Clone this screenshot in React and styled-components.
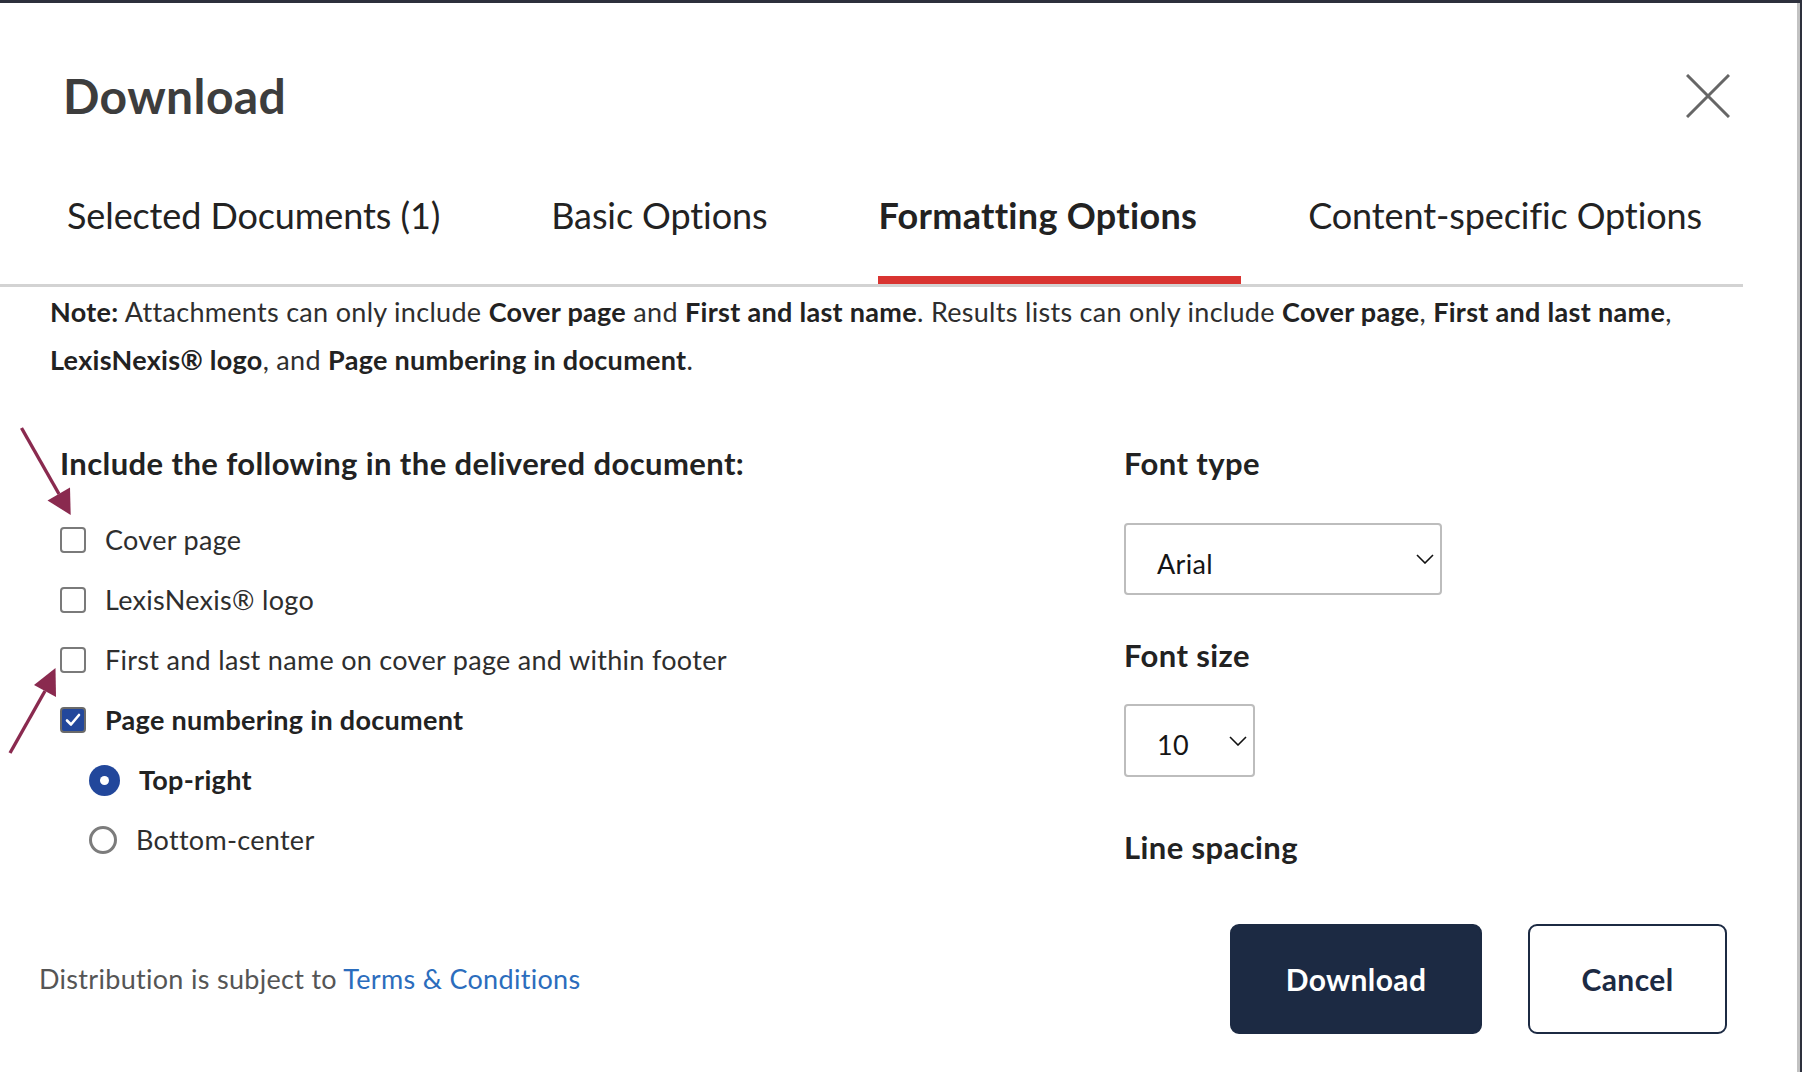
import styled, { createGlobalStyle } from 'styled-components';

const GlobalStyle = createGlobalStyle`
    html, body {
        margin: 0;
        padding: 0;
        background: #2d303c;
    }
    * {
        box-sizing: border-box;
    }
`;

const NAVY = '#1c2a43';
const BLUE = '#22479b';

const options = [
    { label: 'Cover page', checked: false },
    { label: 'LexisNexis® logo', checked: false },
    { label: 'First and last name on cover page and within footer', checked: false },
    { label: 'Page numbering in document', checked: true },
];

const positions = [
    { label: 'Top-right', checked: true },
    { label: 'Bottom-center', checked: false },
];

const tabs = ['Selected Documents (1)', 'Basic Options', 'Formatting Options', 'Content-specific Options'];

function Chevron() {
    return (
        <svg width="18" height="10" viewBox="0 0 18 10" fill="none">
            <path d="M1 1L9 9L17 1" stroke="#111" strokeWidth="1.6" />
        </svg>
    );
}

function Arrows() {
    return (
        <ArrowLayer width="120" height="780" viewBox="0 0 120 780">
            <line x1="21.5" y1="428" x2="59" y2="494" stroke="#8a2a4f" strokeWidth="3.4" />
            <polygon points="70.7,515 47.5,500.5 70,487.5" fill="#8a2a4f" />
            <line x1="10" y1="753" x2="45" y2="691" stroke="#8a2a4f" strokeWidth="3.4" />
            <polygon points="55.5,668 34,685 56,697" fill="#8a2a4f" />
        </ArrowLayer>
    );
}

function App() {
    return (
        <Page>
            <GlobalStyle />
            <Modal>
                <Header>
                    <Title>Download</Title>
                    <CloseButton aria-label="Close">
                        <svg width="44" height="44" viewBox="0 0 44 44" fill="none">
                            <path d="M1 1L43 43M43 1L1 43" stroke="#666" strokeWidth="3" />
                        </svg>
                    </CloseButton>
                </Header>

                <TabBar>
                    {tabs.map(tab => (
                        <Tab key={tab} active={tab === 'Formatting Options'}>{tab}</Tab>
                    ))}
                </TabBar>

                <Note>
                    <b>Note:</b> Attachments can only include <b>Cover page</b> and <b>First and last name</b>. Results lists can only include <b>Cover page</b>, <b>First and last name</b>, <b>LexisNexis® logo</b>, and <b>Page numbering in document</b>.
                </Note>

                <MainGrid>
                    <div>
                        <SectionHeading>Include the following in the delivered document:</SectionHeading>
                        <OptionList>
                            {options.map(opt => (
                                <OptionRow key={opt.label}>
                                    <CheckBox checked={opt.checked}>
                                        {opt.checked && (
                                            <svg width="16" height="14" viewBox="0 0 16 14" fill="none">
                                                <path d="M2 7.5L6 11.5L14 2" stroke="#fff" strokeWidth="2.6" strokeLinecap="round" strokeLinejoin="round" />
                                            </svg>
                                        )}
                                    </CheckBox>
                                    <OptionLabel bold={opt.checked}>{opt.label}</OptionLabel>
                                </OptionRow>
                            ))}
                            {positions.map(pos => (
                                <OptionRow key={pos.label} indent>
                                    <Radio checked={pos.checked} />
                                    <OptionLabel bold={pos.checked}>{pos.label}</OptionLabel>
                                </OptionRow>
                            ))}
                        </OptionList>
                    </div>

                    <div>
                        <SectionHeading>Font type</SectionHeading>
                        <SelectBox width={318} height={72} gap={42}>
                            <SelectValue>Arial</SelectValue>
                            <Chevron />
                        </SelectBox>
                        <SectionHeading gap={42}>Font size</SectionHeading>
                        <SelectBox width={131} height={73} gap={31}>
                            <SelectValue>10</SelectValue>
                            <Chevron />
                        </SelectBox>
                        <SectionHeading gap={52}>Line spacing</SectionHeading>
                    </div>
                </MainGrid>

                <Footer>
                    <FooterText>
                        Distribution is subject to <TermsLink href="#">Terms &amp; Conditions</TermsLink>
                    </FooterText>
                    <ButtonGroup>
                        <Button primary>Download</Button>
                        <Button>Cancel</Button>
                    </ButtonGroup>
                </Footer>
            </Modal>
            <Arrows />
        </Page>
    );
}

export default App;


const Page = styled.div`
    position: relative;
    width: 1802px;
    height: 1072px;
    padding-top: 3px;
    overflow: hidden;
    font-family: 'Lato', 'Liberation Sans', sans-serif;
    color: #2b2b2b;
`;

const Modal = styled.div`
    width: 1800px;
    height: 1069px;
    background: #fff;
    border-right: 3px solid #c2c2c2;
`;

const Header = styled.div`
    display: flex;
    align-items: center;
    justify-content: space-between;
    padding: 64px 67px 0 63px;
`;

const Title = styled.h2`
    margin: 0;
    font-size: 48px;
    line-height: 58px;
    font-weight: 700;
    letter-spacing: 0.4px;
    color: #3d3d3d;
`;

const CloseButton = styled.button`
    display: flex;
    padding: 0;
    border: none;
    background: none;
    cursor: pointer;
`;

const TabBar = styled.div`
    display: flex;
    gap: 67px;
    width: 1743px;
    margin-top: 68px;
    padding-left: 67px;
    border-bottom: 3px solid #d3d3d3;
`;

const Tab = styled.div`
    padding: 0 44px 39px 0;
    font-size: 36px;
    line-height: 44px;
    font-weight: ${props => props.active ? 700 : 400};
    letter-spacing: ${props => props.active ? '0.3px' : '-0.1px'};
    color: #222;
    border-bottom: 8px solid ${props => props.active ? '#d93431' : 'transparent'};
    white-space: nowrap;
    cursor: pointer;
`;

const Note = styled.p`
    margin: 0;
    width: 1720px;
    padding: 1px 0 0 50px;
    font-size: 27px;
    line-height: 48px;
    letter-spacing: 0.3px;
    color: #2e2e2e;

    b {
        font-weight: 700;
        color: #222;
    }
`;

const MainGrid = styled.div`
    display: grid;
    grid-template-columns: 1064px 1fr;
    margin-top: 61px;
    padding-left: 60px;
`;

const SectionHeading = styled.h3`
    margin: ${props => props.gap || 0}px 0 0;
    font-size: 31px;
    line-height: 36px;
    font-weight: 700;
    letter-spacing: 0.4px;
    color: #222;
`;

const OptionList = styled.div`
    margin-top: 29px;
`;

const OptionRow = styled.label`
    display: flex;
    align-items: center;
    gap: 19px;
    height: 60px;
    padding-left: ${props => props.indent ? '29px' : '0'};
    cursor: pointer;
`;

const CheckBox = styled.span`
    display: flex;
    align-items: center;
    justify-content: center;
    width: 26px;
    height: 26px;
    border: 2px solid ${props => props.checked ? '#6a6a6a' : '#7a7a7a'};
    border-radius: 4px;
    background: ${props => props.checked ? BLUE : '#fff'};
`;

const Radio = styled.span`
    display: flex;
    align-items: center;
    justify-content: center;
    width: ${props => props.checked ? '31px' : '28px'};
    height: ${props => props.checked ? '31px' : '28px'};
    border-radius: 50%;
    border: ${props => props.checked ? 'none' : '3px solid #7c7c7c'};
    background: ${props => props.checked ? BLUE : '#fff'};

    &::after {
        content: '';
        display: ${props => props.checked ? 'block' : 'none'};
        width: 9px;
        height: 9px;
        border-radius: 50%;
        background: #fff;
    }
`;

const OptionLabel = styled.span`
    font-size: 27px;
    line-height: 30px;
    letter-spacing: 0.3px;
    font-weight: ${props => props.bold ? 700 : 400};
    color: ${props => props.bold ? '#222' : '#2e2e2e'};
`;

const SelectBox = styled.div`
    display: flex;
    align-items: center;
    justify-content: space-between;
    width: ${props => props.width}px;
    height: ${props => props.height}px;
    margin-top: ${props => props.gap}px;
    padding: 0 6px 0 31px;
    border: 2px solid #bdbdbd;
    border-radius: 4px;
    cursor: pointer;
`;

const SelectValue = styled.span`
    margin-top: 9px;
    font-size: 27px;
    line-height: 30px;
    letter-spacing: 0.3px;
    color: #151515;
`;

const Footer = styled.div`
    display: flex;
    align-items: center;
    justify-content: space-between;
    margin-top: 54px;
    padding: 0 70px 0 39px;
`;

const FooterText = styled.span`
    font-size: 27px;
    line-height: 30px;
    letter-spacing: 0.3px;
    color: #555;
`;

const TermsLink = styled.a`
    color: #2b6dbd;
    text-decoration: none;
`;

const ButtonGroup = styled.div`
    display: flex;
    gap: 46px;
`;

const Button = styled.button`
    width: ${props => props.primary ? '252px' : '199px'};
    height: 110px;
    border: 2px solid ${NAVY};
    border-radius: 9px;
    background: ${props => props.primary ? NAVY : '#fff'};
    color: ${props => props.primary ? '#fff' : NAVY};
    font-family: 'Lato', 'Liberation Sans', sans-serif;
    font-size: 30px;
    font-weight: 700;
    letter-spacing: 0.4px;
    cursor: pointer;
`;

const ArrowLayer = styled.svg`
    position: absolute;
    left: 0;
    top: 0;
    pointer-events: none;
`;
